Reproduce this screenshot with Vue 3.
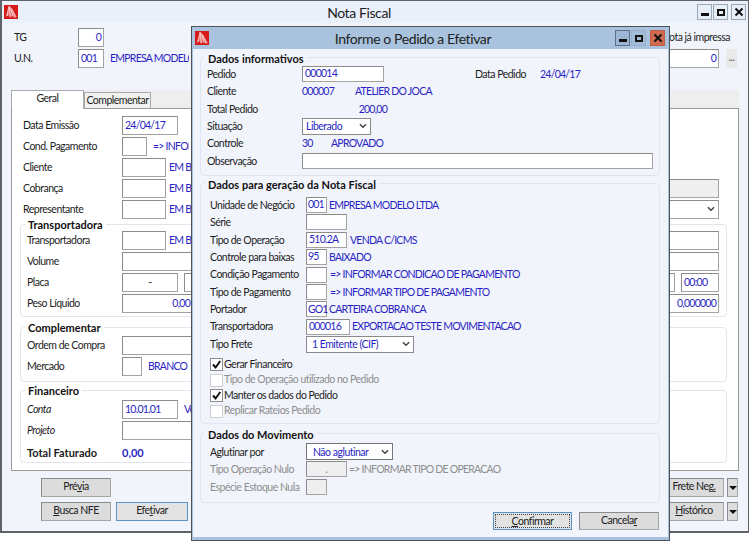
<script setup>
const generalRows = [
  { label: 'Cliente', text: 'EM BRANCO' },
  { label: 'Cobrança', text: 'EM BRANCO', tail: 'disabled' },
  { label: 'Representante', text: 'EM BRANCO', tail: 'select' }
]
const fiscalRows = [
  { label: 'Unidade de Negócio', value: '001', w: 'd21', text: 'EMPRESA MODELO LTDA' },
  { label: 'Série', value: '', w: 'd41' },
  { label: 'Tipo de Operação', value: '510.2A', w: 'd41', text: 'VENDA C/ICMS', gap: true },
  { label: 'Controle para baixas', value: '95', w: 'd21', text: 'BAIXADO' },
  { label: 'Condição Pagamento', value: '', w: 'd21', text: '=> INFORMAR CONDICAO DE PAGAMENTO', gap: true },
  { label: 'Tipo de Pagamento', value: '', w: 'd21', text: '=> INFORMAR TIPO DE PAGAMENTO', gap: true },
  { label: 'Portador', value: 'GO1', w: 'd21', text: 'CARTEIRA COBRANCA' },
  { label: 'Transportadora', value: '000016', w: 'd44', text: 'EXPORTACAO TESTE MOVIMENTACAO' }
]
const checks = [
  { text: 'Gerar Financeiro', on: true },
  { text: 'Tipo de Operação utilizado no Pedido', on: false },
  { text: 'Manter os dados do Pedido', on: true },
  { text: 'Replicar Rateios Pedido', on: false }
]
</script>

<template>
  <div class="screen">
    <!-- main window -->
    <section class="win main">
      <header class="main-title">
        <svg class="logo" viewBox="0 0 14 14"><rect width="14" height="14" fill="#d61a1a"/><path d="M5 1 1.500 12 5 10l1 3 2-2 3 2 2-1L9 5z" fill="#ee7474"/><path d="M5 1 3 11M5.500 1.500 6 12M6.500 2.500 9 11.500M7.500 3.500 11.500 12" stroke="#fbdcdc" stroke-width=".8" fill="none"/></svg>
        <h1 class="main-caption">Nota Fiscal</h1>
        <div class="controls">
          <span class="ctl"><i class="ic-min"></i></span>
          <span class="ctl"><i class="ic-max"></i></span>
          <span class="ctl close-plain">
            <svg viewBox="0 0 10 10"><path d="M1.500 1.500l7 7M8.500 1.500l-7 7" stroke="#111" stroke-width="2"/></svg>
          </span>
        </div>
      </header>
      <div class="main-body">
        <div class="row top-row">
          <span class="top-label">TG</span>
          <span class="field w26 right blue">0</span>
          <span class="note">ota já impressa</span>
        </div>
        <div class="row top-row">
          <span class="top-label">U.N.</span>
          <span class="field w26 blue">001</span>
          <span class="blue after clip-un">EMPRESA MODELO</span>
          <span class="field top-value right blue">0</span>
          <span class="dots">...</span>
        </div>

        <nav class="tabs">
          <span class="tab active">Geral</span>
          <span class="tab">Complementar</span>
        </nav>
        <div class="panel">
          <div class="row plain"><span class="lbl">Data Emissão</span><span class="field w56 blue">24/04/17</span></div>
          <div class="row plain"><span class="lbl">Cond. Pagamento</span><span class="field w25"></span><span class="blue after clip-cond">=&gt; INFORMAR</span></div>
          <div v-for="r in generalRows" :key="r.label" class="row plain">
            <span class="lbl">{{ r.label }}</span><span class="field w44"></span><span class="blue after tiny">{{ r.text }}</span>
            <span v-if="r.tail === 'disabled'" class="field grow disabled"></span>
            <span v-if="r.tail === 'select'" class="field grow select-tail"><svg class="chev" viewBox="0 0 9 6"><path d="M1 1l3.500 3.500L8 1" stroke="#444" stroke-width="1.600" fill="none"/></svg></span>
          </div>

          <div class="group g-trans">
            <span class="legend">Transportadora</span>
            <div class="row"><span class="lbl gl">Transportadora</span><span class="field w44"></span><span class="blue after tiny">EM BRANCO</span><span class="field grow"></span></div>
            <div class="row"><span class="lbl gl">Volume</span><span class="field grow"></span></div>
            <div class="row"><span class="lbl gl">Placa</span><span class="field w56 center">-</span><span class="field grow mid"></span><span class="field w38 blue">00:00</span></div>
            <div class="row"><span class="lbl gl">Peso Líquido</span><span class="field w71 right blue">0,00</span><span class="field grow right blue">0,000000</span></div>
          </div>
          <div class="group g-comp">
            <span class="legend">Complementar</span>
            <div class="row"><span class="lbl gl">Ordem de Compra</span><span class="field w400"></span></div>
            <div class="row"><span class="lbl gl">Mercado</span><span class="field w20"></span><span class="blue after">BRANCO</span></div>
          </div>
          <div class="group g-fin">
            <span class="legend">Financeiro</span>
            <div class="row"><span class="lbl gl"><em>Conta</em></span><span class="field w56 blue">10.01.01</span><span class="blue after clip-ve">Vendas</span></div>
            <div class="row"><span class="lbl gl"><em>Projeto</em></span><span class="field w400"></span></div>
            <div class="row total"><span class="lbl gl"><b>Total Faturado</b></span><b class="blue">0,00</b></div>
          </div>
        </div>

        <div class="btn-row first">
          <button class="btn b70">Pré<u>v</u>ia</button>
          <span class="push"></span>
          <button class="btn b60">Frete Neg<u>.</u></button>
          <button class="btn arrow"><i></i></button>
        </div>
        <div class="btn-row">
          <button class="btn b70"><u>B</u>usca NFE</button>
          <button class="btn b72 focus">Efe<u>t</u>ivar</button>
          <span class="push"></span>
          <button class="btn b60"><u>H</u>istórico</button>
          <button class="btn arrow"><i></i></button>
        </div>
      </div>
    </section>

    <!-- dialog -->
    <section class="win dialog">
      <header class="dlg-title">
        <svg class="logo" viewBox="0 0 14 14"><rect width="14" height="14" fill="#d61a1a"/><path d="M5 1 1.500 12 5 10l1 3 2-2 3 2 2-1L9 5z" fill="#ee7474"/><path d="M5 1 3 11M5.500 1.500 6 12M6.500 2.500 9 11.500M7.500 3.500 11.500 12" stroke="#fbdcdc" stroke-width=".8" fill="none"/></svg>
        <h2 class="dlg-caption">Informe o Pedido a Efetivar</h2>
        <div class="controls dlg-controls">
          <span class="ctl dark"><i class="ic-min"></i></span>
          <span class="ctl soft"><i class="ic-max"></i></span>
          <span class="ctl red">
            <svg viewBox="0 0 10 10"><path d="M1.500 1.500l7 7M8.500 1.500l-7 7" stroke="#111" stroke-width="2"/></svg>
          </span>
        </div>
      </header>
      <div class="dlg-body">
        <div class="dgroup dg1">
          <span class="legend">Dados informativos</span>
          <div class="drow"><span class="dl1">Pedido</span><span class="field dfield d82 blue">000014</span><span class="dl-data">Data Pedido</span><span class="blue">24/04/17</span></div>
          <div class="drow"><span class="dl1">Cliente</span><span class="blue v53">000007</span><span class="blue">ATELIER DO JOCA</span></div>
          <div class="drow"><span class="dl1">Total Pedido</span><span class="blue tot">200,00</span></div>
          <div class="drow"><span class="dl1">Situação</span>
            <span class="sel s69 blue">Liberado<svg class="chev" viewBox="0 0 9 6"><path d="M1 1l3.500 3.500L8 1" stroke="#444" stroke-width="1.600" fill="none"/></svg></span>
          </div>
          <div class="drow"><span class="dl1">Controle</span><span class="blue v29">30</span><span class="blue">APROVADO</span></div>
          <div class="drow"><span class="dl1">Observação</span><span class="field dfield obs"></span></div>
        </div>

        <div class="dgroup dg2">
          <span class="legend">Dados para geração da Nota Fiscal</span>
          <div v-for="r in fiscalRows" :key="r.label" class="drow">
            <span class="dl2">{{ r.label }}</span>
            <span class="field dfield blue" :class="r.w">{{ r.value }}</span>
            <span v-if="r.text" class="blue" :class="r.gap ? 'tx3' : 'tx2'">{{ r.text }}</span>
          </div>
          <div class="drow"><span class="dl2">Tipo Frete</span>
            <span class="sel s108 blue">1 Emitente (CIF)<svg class="chev" viewBox="0 0 9 6"><path d="M1 1l3.500 3.500L8 1" stroke="#444" stroke-width="1.600" fill="none"/></svg></span>
          </div>
          <div class="checks">
            <div v-for="c in checks" :key="c.text" class="check" :class="{ off: !c.on }">
              <span class="box"><svg v-if="c.on" viewBox="0 0 11 11"><path d="M2 5.500l2.600 3L9.200 2" stroke="#111" stroke-width="2" fill="none"/></svg></span><span class="check-text">{{ c.text }}</span>
            </div>
          </div>
        </div>

        <div class="dgroup dg3">
          <span class="legend">Dados do Movimento</span>
          <div class="drow"><span class="dl2">Aglutinar por</span>
            <span class="sel s87 strong blue">Não aglutinar<svg class="chev" viewBox="0 0 9 6"><path d="M1 1l3.500 3.500L8 1" stroke="#444" stroke-width="1.600" fill="none"/></svg></span>
          </div>
          <div class="drow dim"><span class="dl2">Tipo Operação Nulo</span><span class="field dfield d41 disabled center">.</span><span class="tx2 caps">=&gt; INFORMAR TIPO DE OPERACAO</span></div>
          <div class="drow dim"><span class="dl2">Espécie Estoque Nula</span><span class="field dfield d21 disabled"></span></div>
        </div>

        <div class="dlg-actions">
          <button class="btn confirm"><span class="dotted"><u>C</u>onfirmar</span></button>
          <button class="btn cancel">Cancela<u>r</u></button>
        </div>
      </div>
    </section>
  </div>
</template>

<style>
html, body { margin: 0; background: #fff; }
</style>

<style scoped>
* { box-sizing: border-box; }
.screen {
  position: relative; width: 750px; height: 543px; overflow: hidden; background: #fff;
  font: 10.5px/1 Lato, "Liberation Sans", Arial, sans-serif; letter-spacing: -0.5px; color: #1d1d1d;
}
.win { position: absolute; }
.main { left: 0; top: 0; width: 749px; height: 533px; border: 1px solid #5f6367; border-left-width: 2px; border-bottom-width: 2px; background: #f1f4fb; }
.main-title { height: 22px; background: #e9f0fa; display: flex; align-items: center; padding-left: 2px; position: relative; }
.logo { width: 14px; height: 14px; flex: none; }
.main-caption, .dlg-caption { flex: 1; margin: 0; text-align: center; font: 400 14px Lato, "Liberation Sans", sans-serif; letter-spacing: -0.4px; color: #222; }
.main-caption { padding-right: 48px; }
.controls { display: flex; position: absolute; right: 2px; top: 3px; gap: 1px; }
.ctl { width: 15px; height: 16px; display: flex; align-items: center; justify-content: center; border: 1px solid #9aa7b8; background: #e6eef8; }
.ctl svg { width: 10px; height: 10px; }
.ic-min { display: block; width: 8px; height: 3px; background: #111; margin-top: 4px; }
.ic-max { display: block; width: 8px; height: 7px; border: 2px solid #111; border-top-width: 2px; }
.close-plain { margin-left: 2px; }

.main-body { padding: 5px 9px 0 9px; }
.row { display: flex; align-items: center; height: 19px; margin-bottom: 2px; }
.top-label { width: 67px; padding: 0 0 1px 3px; }
.field { height: 19px; flex: none; display: flex; align-items: center; padding: 0 2px 1px; background: #fff; border: 1px solid #a3a3a3; border-top-color: #8c8c8c; border-left-color: #8c8c8c; white-space: nowrap; }
.right { justify-content: flex-end; }
.center { justify-content: center; }
.blue { color: #2a1fc4; letter-spacing: -0.75px; }
.caps { letter-spacing: -0.75px; }
.w20 { width: 20px; } .w25 { width: 25px; } .w26 { width: 26px; } .w38 { width: 38px; }
.w44 { width: 44px; } .w56 { width: 56px; } .w71 { width: 71px; } .w400 { width: 400px; }
.grow { flex: 1; min-width: 0; }
.mid { margin: 0 6px; }
.after { margin-left: 6px; padding-bottom: 1px; white-space: nowrap; }
.tiny, .clip-un, .clip-cond, .clip-ve { overflow: hidden; flex: none; line-height: 13px; }
.tiny { margin: 0 4px 0 3px; width: 22px; }
.clip-un { width: 79px; }
.clip-cond { width: 36px; }
.clip-ve { width: 7px; }
.disabled { background: #efefef; }
.select-tail { justify-content: flex-end; }
.note { margin-left: auto; margin-right: 9px; padding-bottom: 1px; }
.top-value { width: 80px; margin-left: auto; }
.dots { width: 11px; height: 19px; margin: 0 2px 0 7px; background: #e9e9e9; text-align: center; line-height: 17px; color: #555; }

.tabs { display: flex; height: 18px; margin-top: 22px; background: #eee; align-items: flex-end; }
.tab { height: 16px; width: 67px; background: #f1f1f1; border: 1px solid #a9a9a9; border-bottom: 0; text-align: center; line-height: 15px; }
.tab.active { height: 19px; width: 73px; background: #fff; margin-bottom: -1px; position: relative; z-index: 1; border-color: #aaa; line-height: 15px; padding-bottom: 4px; }
.panel { height: 363px; background: #fff; border: 1px solid #9a9a9a; padding: 7px 11px 0 8px; }
.plain { padding: 0 8px 0 3px; }
.lbl { width: 99px; flex: none; padding-bottom: 1px; white-space: nowrap; }
.gl { width: 95px; }
.group, .dgroup { position: relative; border: 1px solid #e1e6ee; border-radius: 4px; }
.group { padding: 6px 7px 0 6px; background: #fff; margin-top: 5px; }
.legend { display: block; width: fit-content; background: inherit; padding: 0 3px; font-weight: 700; font-size: 11px; letter-spacing: 0; line-height: 13px; color: #111; }
.group .legend { position: absolute; left: 4px; top: -7px; margin: 0; }
.g-trans { height: 93px; }
.g-comp { height: 55px; margin-top: 10px; padding-top: 8px; }
.g-fin { height: 73px; margin-top: 8px; padding-top: 9px; }
.total { margin-top: 3px; font-size: 11px; letter-spacing: 0; }
.total .blue { letter-spacing: 0; }

.btn-row { display: flex; height: 19px; padding-left: 30px; }
.btn-row.first { margin-top: 7px; margin-bottom: 5px; }
.push { flex: 1; }
.btn { height: 19px; padding: 0 0 2px; font: inherit; letter-spacing: inherit; color: #222; background: #dcdcdc; border: 1px solid #8b8b8b; border-right-color: #a6a6a6; border-bottom-color: #a6a6a6; }
.b70 { width: 70px; }
.b60 { width: 60px; }
.b72 { width: 72px; margin-left: 5px; }
.focus { border: 1px solid #5d93c4; background: #e3e3e3; }
.arrow { width: 11px; margin-left: 3px; margin-right: 1px; padding: 0; display: flex; align-items: center; justify-content: center; }
.arrow i { display: block; width: 0; height: 0; border: 4px solid transparent; border-top: 4px solid #111; border-bottom: 0; }

.dialog { left: 191px; top: 26px; width: 479px; height: 515px; border: 1px solid #4d5359; background: #a9c3de; padding: 0 1px 2px; }
.dlg-title { height: 22px; display: flex; align-items: center; padding-left: 2px; position: relative; background: #a9c3de; }
.dlg-caption { padding-right: 51px; }
.dlg-controls { right: 3px; top: 3px; }
.dark { background: #9cb7d4; border: 1px solid #5e6f85; }
.soft { background: #a3bcd8; border-color: #98b0cc; }
.red { margin-left: 3px; background: #cf6a50; border-color: #bf5d46; }
.dlg-body { height: 488px; background: #f1f4fb; padding: 8px 8px 0 7px; }
.dgroup { background: #f1f4fb; }
.dg1 { height: 119px; padding: 7.3px 6px 0 6px; }
.dg2 { height: 241px; margin-top: 7px; padding: 12.3px 6px 0 9px; }
.dg3 { height: 70px; margin-top: 9px; padding: 9.3px 6px 0 9px; }
.dgroup > .legend { position: absolute; top: -6px; left: 4px; margin: 0; }
.drow { display: flex; align-items: center; height: 17.4px; white-space: nowrap; }
.dl1 { width: 95px; flex: none; }
.dl2 { width: 96px; flex: none; }
.dfield { height: 16px; padding: 0 2px 1px; }
.d82 { width: 82px; }
.d21 { width: 21px; padding: 0 1px 1px; letter-spacing: -0.9px; }
.d41 { width: 41px; }
.d44 { width: 44px; }
.obs { width: 351px; }
.dl-data { margin-left: 91px; width: 65px; }
.v53 { width: 53px; }
.v29 { width: 29px; }
.tot { width: 85px; text-align: right; }
.tx2 { margin-left: 2px; }
.tx3 { margin-left: 3px; }
.sel { height: 17px; display: flex; align-items: center; justify-content: space-between; padding: 0 3px 0 3px; background: #fff; border: 1px solid #8a8a8a; letter-spacing: -0.5px; }
.s69 { width: 69px; }
.s108 { width: 108px; padding-left: 5px; }
.s87 { width: 87px; padding-left: 6px; }
.strong { border-width: 1.5px; border-color: #777; }
.chev { width: 8px; height: 6px; flex: none; }
.select-tail .chev { margin-right: 1px; }
.checks { margin-top: 4px; }
.check { display: flex; align-items: center; height: 15.5px; }
.check-text { padding-bottom: 1px; }
.box { width: 13px; height: 13px; margin-right: 1px; border: 1px solid #8e8e8e; background: #fff; display: flex; align-items: center; justify-content: center; }
.box svg { width: 11px; height: 11px; }
.off { color: #8e8e8e; }
.off .box { border-color: #cfcfcf; }
.dim { color: #8e8e8e; }
.dlg-actions { display: flex; gap: 7px; justify-content: flex-end; margin-top: 9px; padding-right: 1px; }
.confirm, .cancel { width: 80px; height: 18px; }
.confirm { width: 79px; border: 1px solid #5d93c4; padding: 1px; background: #e3e3e3; }
.dotted { display: block; height: 100%; border: 1px dotted #444; line-height: 12px; }
</style>
